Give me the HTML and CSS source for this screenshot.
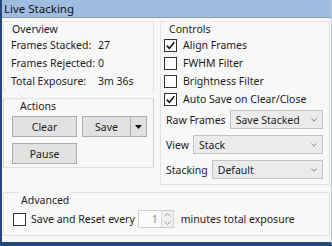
FILE: index.html
```html
<!DOCTYPE html>
<html>
<head>
<meta charset="utf-8">
<link rel="stylesheet" href="styles.css">
</head>
<body>
<div class="window">
  <div class="titlebar">Live Stacking</div>
  <div class="content">
    <div class="left">
      <div class="group overview">
        <div class="legend">Overview</div>
        <div class="stats">
          <span>Frames Stacked:</span><span>27</span>
          <span>Frames Rejected:</span><span>0</span>
          <span>Total Exposure:</span><span>3m 36s</span>
        </div>
      </div>
      <div class="group actions">
        <div class="legend">Actions</div>
        <div class="btn-grid">
          <div class="btn">Clear</div>
          <div class="split">
            <div class="btn split-main">Save</div>
            <div class="btn split-arrow"><svg width="7" height="4" viewBox="0 0 7 4"><path d="M0 0H7L3.5 4Z" fill="#111"/></svg></div>
          </div>
          <div class="btn">Pause</div>
        </div>
      </div>
    </div>
    <div class="group controls">
      <div class="legend">Controls</div>
      <div class="check"><span class="box"><svg width="11" height="11" viewBox="0 0 11 11"><path d="M1.8 5.6L4.3 8.2L9.3 2.3" fill="none" stroke="#111" stroke-width="1.6"/></svg></span>Align Frames</div>
      <div class="check"><span class="box"></span>FWHM Filter</div>
      <div class="check"><span class="box"></span>Brightness Filter</div>
      <div class="check"><span class="box"><svg width="11" height="11" viewBox="0 0 11 11"><path d="M1.8 5.6L4.3 8.2L9.3 2.3" fill="none" stroke="#111" stroke-width="1.6"/></svg></span>Auto Save on Clear/Close</div>
      <div class="field first"><span class="field-label">Raw Frames</span><div class="select"><span>Save Stacked</span><svg width="6" height="4" viewBox="0 0 6 4"><path d="M0.5 0.5L3 3.2L5.5 0.5" fill="none" stroke="#888" stroke-width="1"/></svg></div></div>
      <div class="field"><span class="field-label">View</span><div class="select"><span>Stack</span><svg width="6" height="4" viewBox="0 0 6 4"><path d="M0.5 0.5L3 3.2L5.5 0.5" fill="none" stroke="#888" stroke-width="1"/></svg></div></div>
      <div class="field"><span class="field-label">Stacking</span><div class="select"><span>Default</span><svg width="6" height="4" viewBox="0 0 6 4"><path d="M0.5 0.5L3 3.2L5.5 0.5" fill="none" stroke="#888" stroke-width="1"/></svg></div></div>
    </div>
    <div class="group advanced">
      <div class="legend">Advanced</div>
      <div class="adv-row">
        <span class="box"></span>
        <span class="adv-text">Save and Reset every</span>
        <div class="spinner">
          <span class="spin-value">1</span>
          <span class="spin-buttons">
            <svg width="7" height="4" viewBox="0 0 7 4"><path d="M0.5 3.5L3.5 0.5L6.5 3.5" fill="none" stroke="#9a9a9a" stroke-width="1"/></svg>
            <svg width="7" height="4" viewBox="0 0 7 4"><path d="M0.5 0.5L3.5 3.5L6.5 0.5" fill="none" stroke="#9a9a9a" stroke-width="1"/></svg>
          </span>
        </div>
        <span class="adv-after">minutes total exposure</span>
      </div>
    </div>
  </div>
</div>
</body>
</html>
```
FILE: styles.css
```css
html, body {
  margin: 0;
  padding: 0;
  background: #f8f8f8;
}
body {
  font-family: "Noto Sans", "Open Sans", sans-serif;
  font-size: 10.5px;
  color: #1c1c1c;
  white-space: nowrap;
}
.window {
  width: 332px;
  height: 246px;
  box-sizing: border-box;
  border-left: 2px solid #24477e;
  border-right: 1px solid #b9c9dd;
  border-bottom: 4px solid #24477e;
  background: #f8f8f8;
  display: flex;
  flex-direction: column;
}
.titlebar {
  height: 17px;
  line-height: 17px;
  padding-left: 2px;
  font-size: 11.5px;
  color: #111;
  background: #9fbde0;
  border-bottom: 1px solid #8c9cb2;
  flex: none;
}
.content {
  flex: 1;
  display: grid;
  grid-template-columns: 151px 170px;
  column-gap: 6px;
  row-gap: 1px;
  align-items: start;
  padding: 3px 0 0 1px;
}
.group {
  border: 1px solid #e2e2e2;
  box-sizing: border-box;
}
.overview {
  border-bottom-color: transparent;
}
.legend {
  width: fit-content;
  margin: -1px 0 0 6px;
  padding: 1px 2px 0;
  line-height: 14px;
  background: #f8f8f8;
}
.actions .legend {
  background: transparent;
}
.stats {
  display: grid;
  grid-template-columns: 87px auto;
  line-height: 18px;
  padding: 0 0 2px 7px;
}
.actions {
  margin-top: 5px;
  padding: 0 0 3px 8px;
  border-left-color: #cfcfcf;
  border-right-color: #cfcfcf;
}
.btn-grid {
  margin-top: 3px;
  display: grid;
  grid-template-columns: 65px 65px;
  grid-auto-rows: 21px;
  column-gap: 5px;
  row-gap: 6px;
}
.btn {
  box-sizing: border-box;
  background: #e1e1e1;
  border: 1px solid #adadad;
  display: flex;
  align-items: center;
  justify-content: center;
}
.split {
  display: flex;
}
.split-main {
  width: 49px;
}
.split-arrow {
  width: 17px;
  margin-left: -1px;
}
.controls {
  padding: 0 6px 5px 0;
}
.check {
  display: flex;
  align-items: center;
  height: 18px;
  padding-left: 3px;
}
.box {
  width: 13px;
  height: 13px;
  box-sizing: border-box;
  border: 1px solid #333;
  background: #fff;
  margin-right: 6px;
  display: flex;
  align-items: center;
  justify-content: center;
  flex: none;
}
.field {
  display: flex;
  align-items: center;
  gap: 4px;
  padding-left: 5px;
  margin-top: 6px;
}
.field.first {
  margin-top: 2px;
}
.field-label {
  flex: none;
}
.select {
  flex: 1;
  height: 19px;
  box-sizing: border-box;
  background: #ebebeb;
  border: 1px solid #c3c3c3;
  display: flex;
  align-items: center;
  justify-content: space-between;
  padding: 0 5px 0 5px;
}
.advanced {
  grid-column: 1 / 3;
  padding: 0 0 5px 9px;
}
.adv-row {
  margin-top: 1px;
  height: 22px;
  display: flex;
  align-items: center;
}
.adv-row .box {
  margin-right: 5px;
}
.spinner {
  margin-left: 3px;
  width: 36px;
  height: 18px;
  box-sizing: border-box;
  border: 1px solid #cfcfcf;
  background: #fbfbfb;
  display: flex;
}
.spin-value {
  flex: 1;
  text-align: right;
  padding-right: 3px;
  color: #8a8a8a;
  line-height: 16px;
}
.spin-buttons {
  width: 11px;
  border-left: 1px solid #d8d8d8;
  display: flex;
  flex-direction: column;
  align-items: center;
  justify-content: space-around;
  background: #f0f0f0;
}
.adv-after {
  margin-left: 7px;
}
```
